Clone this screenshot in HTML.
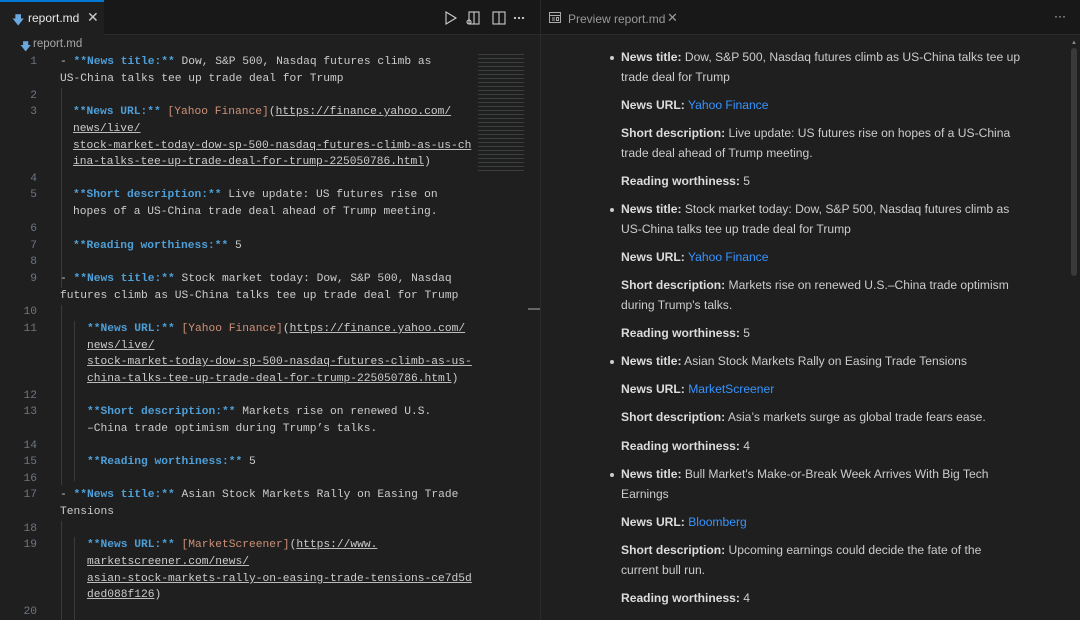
<!DOCTYPE html>
<html><head><meta charset="utf-8"><style>
*{margin:0;padding:0;box-sizing:border-box}
body{width:1080px;height:620px;background:#1f1f1f;overflow:hidden;position:relative;font-family:"Liberation Sans",sans-serif}
.tabbar{position:absolute;top:0;height:35px;background:#181818;border-bottom:1px solid #2b2b2b}
.m{position:absolute;font-family:"Liberation Mono",monospace;font-size:11.25px;line-height:16px;white-space:pre;color:#cccccc}
.n{position:absolute;font-family:"Liberation Mono",monospace;font-size:11.25px;line-height:16px;color:#6e7681;width:37px;text-align:right;left:0}
.b{color:#4e9fd8;font-weight:bold}
.o{color:#ce9178}
.u{text-decoration:underline;text-decoration-color:#bbb}
.p{position:absolute;left:621px;font-size:12.1px;line-height:20px;color:#cccccc;white-space:nowrap}
.p b{color:#dcdcdc}
.a{color:#3794ff}
.dot{position:absolute;left:610px;width:4px;height:4px;border-radius:2px;background:#ccc}
.g{position:absolute;width:1px;background:#3a3a3a}
</style></head><body>
<div class="tabbar" style="left:0;width:540px"></div>
<div style="position:absolute;left:0;top:0;width:104px;height:35px;background:#1f1f1f;border-top:2px solid #0078d4"></div>
<div style="position:absolute;left:12px;top:11px;color:#6aa9e0;font-size:12px">&#129095;</div>
<div style="position:absolute;left:28px;top:11px;color:#e8e8e8;font-size:12px">report.md</div>
<div style="position:absolute;left:87px;top:9px;color:#ccc;font-size:14px">✕</div>
<svg style="position:absolute;left:440px;top:10px" width="100" height="16" fill="none" stroke="#ccc" stroke-width="1.1">
<path d="M6 2 L16 8 L6 14 Z"/>
<rect x="29" y="2" width="10" height="12"/><line x1="34" y1="2" x2="34" y2="14"/><circle cx="29" cy="12" r="2"/>
<rect x="53" y="2" width="12" height="12"/><line x1="59" y1="2" x2="59" y2="14"/>
<circle cx="75" cy="8" r=".6" fill="#ccc"/><circle cx="79" cy="8" r=".6" fill="#ccc"/><circle cx="83" cy="8" r=".6" fill="#ccc"/>
</svg>
<div class="tabbar" style="left:541px;width:539px"></div>
<div style="position:absolute;left:541px;top:0;width:140px;height:34px;background:#181818"></div>
<svg style="position:absolute;left:549px;top:12px" width="12" height="11" fill="none" stroke="#aaa"><rect x=".5" y=".5" width="11" height="10"/><line x1="1" y1="3.5" x2="11" y2="3.5"/><line x1="3" y1="6" x2="6" y2="6"/><line x1="3" y1="8" x2="6" y2="8"/><rect x="7.5" y="5.5" width="2" height="3"/></svg>
<div style="position:absolute;left:568px;top:12px;color:#999;font-size:12px">Preview report.md</div>
<div style="position:absolute;left:667px;top:10px;color:#999;font-size:13px">✕</div>
<div style="position:absolute;left:1054px;top:9px;color:#ccc;font-size:12px">···</div>
<div style="position:absolute;left:540px;top:0;width:1px;height:620px;background:#2b2b2b"></div>
<div style="position:absolute;left:20px;top:38px;color:#6aa9e0;font-size:11px">&#129095;</div>
<div style="position:absolute;left:33px;top:38px;color:#a8a8a8;font-size:11.5px">report.md</div>
<!-- minimap -->
<div style="position:absolute;left:478px;top:53px;width:46px;height:120px;opacity:.22;background:repeating-linear-gradient(#1f1f1f 0 1px,#9aa 1px 2px,#1f1f1f 2px 4px)"></div>
<div style="position:absolute;left:528px;top:308px;width:12px;height:2px;background:#666"></div>
<!-- indent guides -->
<div class="g" style="left:61px;top:88px;height:200px"></div>
<div class="g" style="left:61px;top:305px;height:180px"></div>
<div class="g" style="left:74px;top:321px;height:160px"></div>
<div class="g" style="left:61px;top:521px;height:99px"></div>
<div class="g" style="left:74px;top:537px;height:83px"></div>

<div class="n" style="top:54px">1</div><div class="m" style="left:60px;top:54px">- <span class="b">**News title:**</span> Dow, S&amp;P 500, Nasdaq futures climb as</div>
<div class="m" style="left:60px;top:71px">US-China talks tee up trade deal for Trump</div>
<div class="n" style="top:88px">2</div>
<div class="n" style="top:104px">3</div><div class="m" style="left:73px;top:104px"><span class="b">**News URL:**</span> <span class="o">[Yahoo Finance]</span>(<span class="u">https://finance.yahoo.com/</span></div>
<div class="m u" style="left:73px;top:121px">news/live/</div>
<div class="m u" style="left:73px;top:138px">stock-market-today-dow-sp-500-nasdaq-futures-climb-as-us-ch</div>
<div class="m" style="left:73px;top:154px"><span class="u">ina-talks-tee-up-trade-deal-for-trump-225050786.html</span>)</div>
<div class="n" style="top:171px">4</div>
<div class="n" style="top:187px">5</div><div class="m" style="left:73px;top:187px"><span class="b">**Short description:**</span> Live update: US futures rise on</div>
<div class="m" style="left:73px;top:204px">hopes of a US-China trade deal ahead of Trump meeting.</div>
<div class="n" style="top:221px">6</div>
<div class="n" style="top:238px">7</div><div class="m" style="left:73px;top:238px"><span class="b">**Reading worthiness:**</span> 5</div>
<div class="n" style="top:254px">8</div>
<div class="n" style="top:271px">9</div><div class="m" style="left:60px;top:271px">- <span class="b">**News title:**</span> Stock market today: Dow, S&amp;P 500, Nasdaq</div>
<div class="m" style="left:60px;top:288px">futures climb as US-China talks tee up trade deal for Trump</div>
<div class="n" style="top:304px">10</div>
<div class="n" style="top:321px">11</div><div class="m" style="left:87px;top:321px"><span class="b">**News URL:**</span> <span class="o">[Yahoo Finance]</span>(<span class="u">https://finance.yahoo.com/</span></div>
<div class="m u" style="left:87px;top:338px">news/live/</div>
<div class="m u" style="left:87px;top:354px">stock-market-today-dow-sp-500-nasdaq-futures-climb-as-us-</div>
<div class="m" style="left:87px;top:371px"><span class="u">china-talks-tee-up-trade-deal-for-trump-225050786.html</span>)</div>
<div class="n" style="top:388px">12</div>
<div class="n" style="top:404px">13</div><div class="m" style="left:87px;top:404px"><span class="b">**Short description:**</span> Markets rise on renewed U.S.</div>
<div class="m" style="left:87px;top:421px">–China trade optimism during Trump’s talks.</div>
<div class="n" style="top:438px">14</div>
<div class="n" style="top:454px">15</div><div class="m" style="left:87px;top:454px"><span class="b">**Reading worthiness:**</span> 5</div>
<div class="n" style="top:471px">16</div>
<div class="n" style="top:487px">17</div><div class="m" style="left:60px;top:487px">- <span class="b">**News title:**</span> Asian Stock Markets Rally on Easing Trade</div>
<div class="m" style="left:60px;top:504px">Tensions</div>
<div class="n" style="top:521px">18</div>
<div class="n" style="top:537px">19</div><div class="m" style="left:87px;top:537px"><span class="b">**News URL:**</span> <span class="o">[MarketScreener]</span>(<span class="u">https://www.</span></div>
<div class="m u" style="left:87px;top:554px">marketscreener.com/news/</div>
<div class="m u" style="left:87px;top:571px">asian-stock-markets-rally-on-easing-trade-tensions-ce7d5d</div>
<div class="m" style="left:87px;top:587px"><span class="u">ded088f126</span>)</div>
<div class="n" style="top:604px">20</div>

<!-- preview -->
<div style="position:absolute;left:1071px;top:48px;width:6px;height:228px;background:#3a3a3a;border-radius:3px"></div>
<div style="position:absolute;left:1071px;top:40px;color:#888;font-size:6px">▲</div>
<div class="dot" style="top:56px"></div>
<div class="p" style="top:47px"><b>News title:</b> Dow, S&amp;P 500, Nasdaq futures climb as US-China talks tee up</div>
<div class="p" style="top:67px">trade deal for Trump</div>
<div class="p" style="top:95px"><b>News URL:</b> <span class="a">Yahoo Finance</span></div>
<div class="p" style="top:123px"><b>Short description:</b> Live update: US futures rise on hopes of a US-China</div>
<div class="p" style="top:143px">trade deal ahead of Trump meeting.</div>
<div class="p" style="top:171px"><b>Reading worthiness:</b> 5</div>
<div class="dot" style="top:208px"></div>
<div class="p" style="top:199px"><b>News title:</b> Stock market today: Dow, S&amp;P 500, Nasdaq futures climb as</div>
<div class="p" style="top:219px">US-China talks tee up trade deal for Trump</div>
<div class="p" style="top:247px"><b>News URL:</b> <span class="a">Yahoo Finance</span></div>
<div class="p" style="top:275px"><b>Short description:</b> Markets rise on renewed U.S.–China trade optimism</div>
<div class="p" style="top:295px">during Trump's talks.</div>
<div class="p" style="top:323px"><b>Reading worthiness:</b> 5</div>
<div class="dot" style="top:360px"></div>
<div class="p" style="top:351px"><b>News title:</b> Asian Stock Markets Rally on Easing Trade Tensions</div>
<div class="p" style="top:379px"><b>News URL:</b> <span class="a">MarketScreener</span></div>
<div class="p" style="top:407px"><b>Short description:</b> Asia’s markets surge as global trade fears ease.</div>
<div class="p" style="top:436px"><b>Reading worthiness:</b> 4</div>
<div class="dot" style="top:473px"></div>
<div class="p" style="top:464px"><b>News title:</b> Bull Market's Make-or-Break Week Arrives With Big Tech</div>
<div class="p" style="top:484px">Earnings</div>
<div class="p" style="top:512px"><b>News URL:</b> <span class="a">Bloomberg</span></div>
<div class="p" style="top:540px"><b>Short description:</b> Upcoming earnings could decide the fate of the</div>
<div class="p" style="top:560px">current bull run.</div>
<div class="p" style="top:588px"><b>Reading worthiness:</b> 4</div>
</body></html>
